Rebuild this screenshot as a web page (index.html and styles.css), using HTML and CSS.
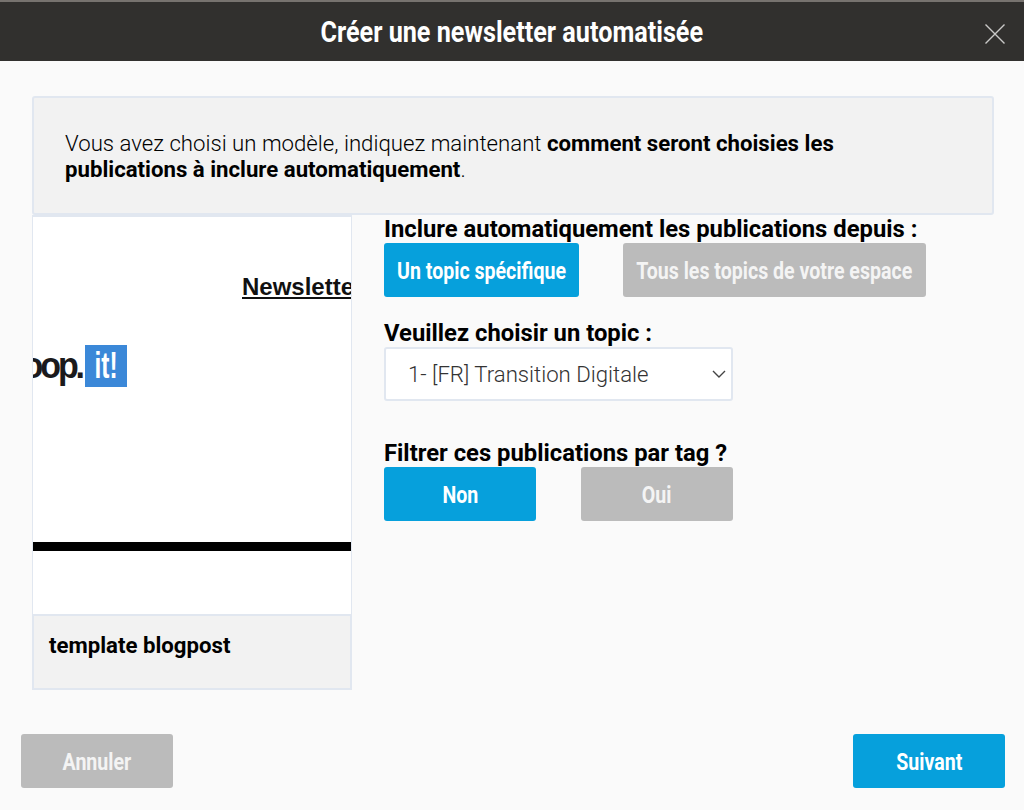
FILE: index.html
```html
<!DOCTYPE html>
<html lang="fr">
<head>
<meta charset="UTF-8">
<meta name="viewport" content="width=device-width, initial-scale=1.0">
<title>Créer une newsletter automatisée</title>
<link rel="stylesheet" href="styles.css">
</head>
<body>

<div class="modal">
    <div class="modal-header">
        <h1 class="modal-title"><span class="narrow">Créer une newsletter automatisée</span></h1>
        <button class="close" aria-label="Fermer">
            <svg width="20" height="20" viewBox="0 0 20 20"><path d="M0.5 0.5L19.5 19.5M19.5 0.5L0.5 19.5" stroke="#c9c9c8" stroke-width="1.4" fill="none"/></svg>
        </button>
    </div>

    <div class="modal-body">
        <div class="intro">
            <p>Vous avez choisi un modèle, indiquez maintenant <b>comment seront choisies les publications à inclure automatiquement</b>.</p>
        </div>

        <div class="columns">
            <div class="card">
                <div class="thumb">
                    <div class="thumb-title">Newsletter</div>
                    <div class="thumb-logo">
                        <span class="logo-text">Scoop.</span>
                        <span class="logo-box"><span class="logo-it">it!</span></span>
                    </div>
                    <div class="thumb-rule"></div>
                </div>
                <div class="card-name">template blogpost</div>
            </div>

            <div class="options">
                <div class="label">Inclure automatiquement les publications depuis :</div>
                <div class="btn-row">
                    <button class="btn btn-on btn-specific"><span class="narrow">Un topic spécifique</span></button>
                    <button class="btn btn-off btn-all"><span class="narrow">Tous les topics de votre espace</span></button>
                </div>

                <div class="label label-topic">Veuillez choisir un topic :</div>
                <div class="select">
                    <span>1- [FR] Transition Digitale</span>
                    <svg width="14" height="8" viewBox="0 0 14 8"><path d="M1 1L7 7L13 1" stroke="#444" stroke-width="1.4" fill="none"/></svg>
                </div>

                <div class="label label-tag">Filtrer ces publications par tag ?</div>
                <div class="btn-row">
                    <button class="btn btn-on btn-yesno"><span class="narrow">Non</span></button>
                    <button class="btn btn-off btn-yesno btn-oui"><span class="narrow">Oui</span></button>
                </div>
            </div>
        </div>
    </div>

    <div class="modal-footer">
        <button class="btn btn-off btn-footer"><span class="narrow">Annuler</span></button>
        <button class="btn btn-on btn-footer"><span class="narrow">Suivant</span></button>
    </div>
</div>

</body>
</html>
```

FILE: styles.css
```css
html, body {
    margin: 0;
    height: 100%;
}
body {
    font-family: Roboto, "Liberation Sans", sans-serif;
    background-color: #fafafa;
    color: #000;
    overflow: hidden;
}
.modal {
    height: 810px;
    display: flex;
    flex-direction: column;
    border-top: 2px solid #77736f;
    box-sizing: border-box;
}
.narrow {
    display: inline-block;
    transform: scaleX(0.84);
    white-space: nowrap;
    flex: none;
}

/* header */
.modal-header {
    height: 59px;
    background-color: #31302e;
    display: flex;
    align-items: center;
    justify-content: center;
    position: relative;
    flex: none;
}
.modal-title {
    margin: 0;
    color: #fff;
    font-size: 30px;
    font-weight: 700;
    line-height: 59px;
}
.close {
    position: absolute;
    right: 19px;
    top: 22px;
    padding: 0;
    border: none;
    background: none;
    line-height: 0;
}

/* body */
.modal-body {
    flex: 1;
    padding: 35px 30px 0 32px;
}
.intro {
    height: 119px;
    box-sizing: border-box;
    background-color: #f2f2f2;
    border: 2px solid #e1e7f0;
    border-radius: 3px;
    padding: 32px 32px 0 31px;
}
.intro p {
    margin: 0;
    font-size: 22.2px;
    font-weight: 300;
    line-height: 26px;
    max-width: 860px;
}
.intro b {
    font-weight: 700;
}
.columns {
    display: flex;
    gap: 32px;
}

/* template card */
.card {
    width: 320px;
    height: 475px;
    box-sizing: border-box;
    border: 2px solid #e1e7f0;
    border-top: none;
    display: flex;
    flex-direction: column;
    flex: none;
}
.thumb {
    height: 397px;
    margin: 0 -1px;
    background-color: #fff;
    border-top: 2px solid #e1e7f0;
    border-bottom: 2px solid #e1e7f0;
    overflow: hidden;
    flex: none;
}
.thumb-title {
    margin: 57px 0 0 209px;
    font-family: "Liberation Sans", sans-serif;
    font-size: 24px;
    font-weight: 700;
    line-height: 26px;
    color: #111;
    white-space: nowrap;
    text-decoration: underline;
}
.thumb-logo {
    width: 94px;
    height: 42px;
    margin-top: 45px;
    display: flex;
    justify-content: flex-end;
    align-items: center;
}
.logo-text {
    font-family: "Liberation Sans", sans-serif;
    font-size: 37px;
    font-weight: 700;
    letter-spacing: -3.4px;
    color: #1b1a1c;
    margin-right: 3px;
    flex: none;
    display: inline-block;
    transform: scaleX(0.92);
    transform-origin: right center;
}
.logo-box {
    width: 42px;
    height: 42px;
    flex: none;
    background-color: #3b88d8;
    color: #fff;
    font-family: "Liberation Sans", sans-serif;
    font-size: 36px;
    font-weight: 700;
    line-height: 41px;
    text-align: center;
}
.logo-it {
    display: inline-block;
    transform: scaleX(0.68);
}
.thumb-rule {
    height: 9px;
    margin-top: 155px;
    background-color: #000;
}
.card-name {
    flex: 1;
    background-color: #f2f2f2;
    padding: 15px 15px 0;
    font-size: 22.2px;
    font-weight: 700;
    line-height: 28px;
}

/* options */
.options {
    flex: 1;
}
.label {
    font-size: 23.8px;
    font-weight: 700;
    line-height: 28px;
    white-space: nowrap;
}
.btn-row {
    display: flex;
}
.btn {
    height: 54px;
    border: none;
    border-radius: 3px;
    padding: 1px 0 0;
    color: #fff;
    font-family: Roboto, sans-serif;
    font-size: 23.3px;
    font-weight: 700;
    box-sizing: border-box;
    display: flex;
    align-items: center;
    justify-content: center;
    overflow: hidden;
}
.btn-on {
    background-color: #06a0dc;
}
.btn-off {
    background-color: #bbbbbb;
    color: #f4f4f4;
}
.btn-specific {
    width: 195px;
    margin-right: 44px;
}
.btn-all {
    width: 303px;
}
.label-topic {
    margin-top: 22px;
}
.select {
    width: 349px;
    height: 54px;
    box-sizing: border-box;
    background-color: #fff;
    border: 2px solid #e1e7f0;
    border-radius: 3px;
    display: flex;
    align-items: center;
    justify-content: space-between;
    padding: 0 5px 0 22px;
    font-size: 22.2px;
    font-weight: 300;
    color: #333;
}
.label-tag {
    margin-top: 38px;
}
.btn-yesno {
    width: 152px;
}
.btn-oui {
    margin-left: 45px;
}

/* footer */
.modal-footer {
    flex: none;
    display: flex;
    justify-content: space-between;
    padding: 0 19px 22px 21px;
}
.btn-footer {
    width: 152px;
}
```
